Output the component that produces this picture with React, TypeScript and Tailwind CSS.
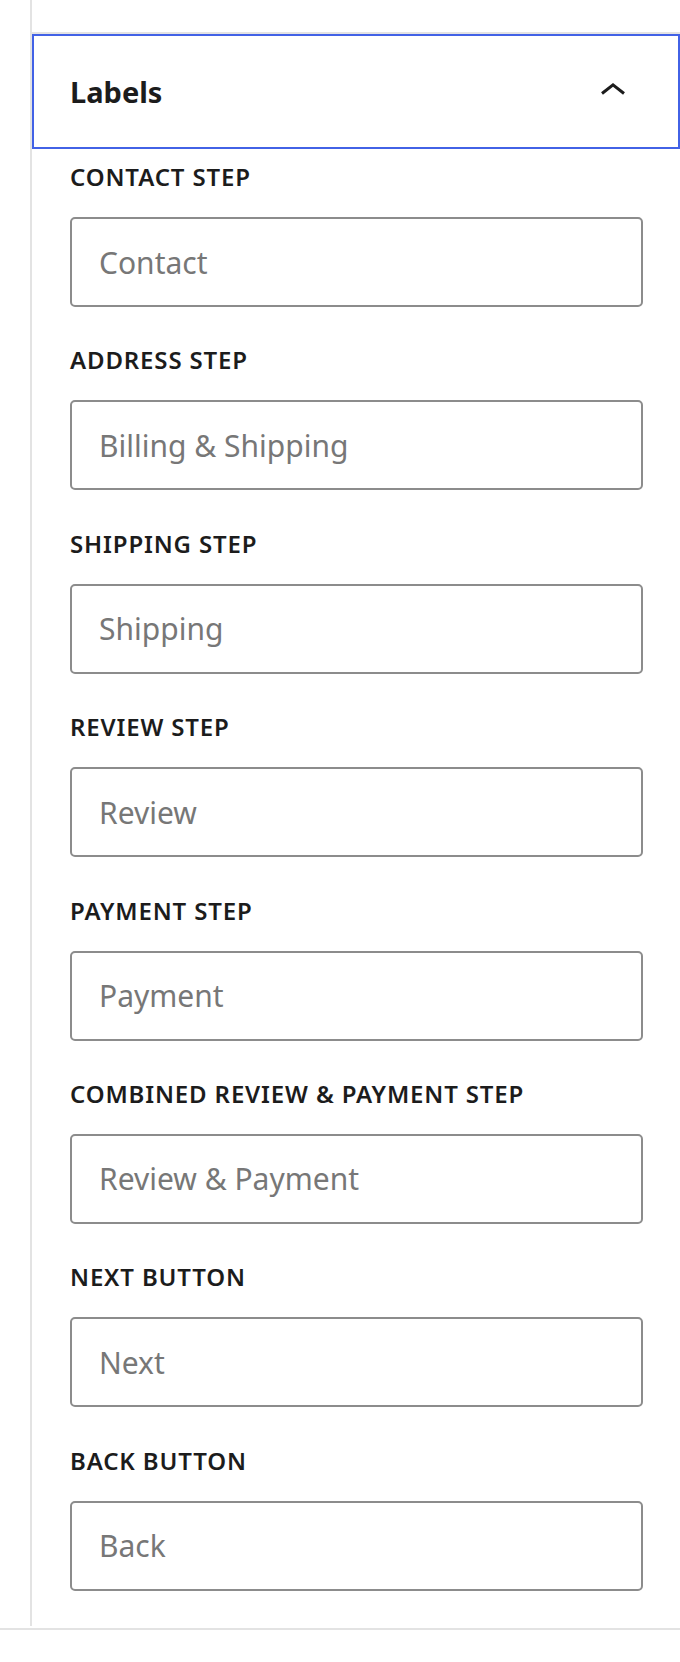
import React, { useState } from 'react';

const fields = [
  { label: 'CONTACT STEP', placeholder: 'Contact' },
  { label: 'ADDRESS STEP', placeholder: 'Billing & Shipping' },
  { label: 'SHIPPING STEP', placeholder: 'Shipping' },
  { label: 'REVIEW STEP', placeholder: 'Review' },
  { label: 'PAYMENT STEP', placeholder: 'Payment' },
  { label: 'COMBINED REVIEW & PAYMENT STEP', placeholder: 'Review & Payment' },
  { label: 'NEXT BUTTON', placeholder: 'Next' },
  { label: 'BACK BUTTON', placeholder: 'Back' },
];

const Chevron: React.FC<{ open: boolean }> = ({ open }) => (
  <svg
    width="26"
    height="14"
    viewBox="0 0 26 14"
    fill="none"
    stroke="#1c1c1c"
    strokeWidth="3"
    strokeLinejoin="miter"
    className={`-mt-[6px] ${open ? '' : 'rotate-180'}`}
  >
    <polyline points="2,11.5 13,2.8 24,11.5" />
  </svg>
);

export default function App() {
  const [open, setOpen] = useState(true);

  return (
    <div className="w-[680px] h-[1662px] bg-white font-['Noto_Sans','Open_Sans',sans-serif] text-[#1c1c1c]">
      <div className="ml-[30px] border-l-2 border-[#e3e3e3] pt-[32px] pb-[35px]">
        <div className="border-t-2 border-[#e3e3e3]">
          <button
            onClick={() => setOpen(!open)}
            className="w-full h-[115px] flex items-center justify-between border-2 border-[#4262e6] pl-[36px] pr-[52px] text-left"
          >
            <span className="text-[29px] leading-[40px] font-bold">Labels</span>
            <Chevron open={open} />
          </button>
        </div>

        {open && (
          <div className="flex flex-col gap-[37.4px] pl-[38px] pr-[37px] pt-[12px]">
            {fields.map((f) => (
              <label key={f.label} className="flex flex-col gap-[24px]">
                <span className="text-[24px] leading-[32px] font-semibold tracking-[0.85px]">{f.label}</span>
                <input
                  type="text"
                  placeholder={f.placeholder}
                  className="h-[90px] w-full rounded-[5px] border-2 border-[#8c8c8c] bg-white px-[27px] text-[30px] outline-none placeholder:text-[#777777]"
                />
              </label>
            ))}
          </div>
        )}
      </div>
      <div className="mt-[2px] border-t-2 border-[#e3e3e3]" />
    </div>
  );
}
